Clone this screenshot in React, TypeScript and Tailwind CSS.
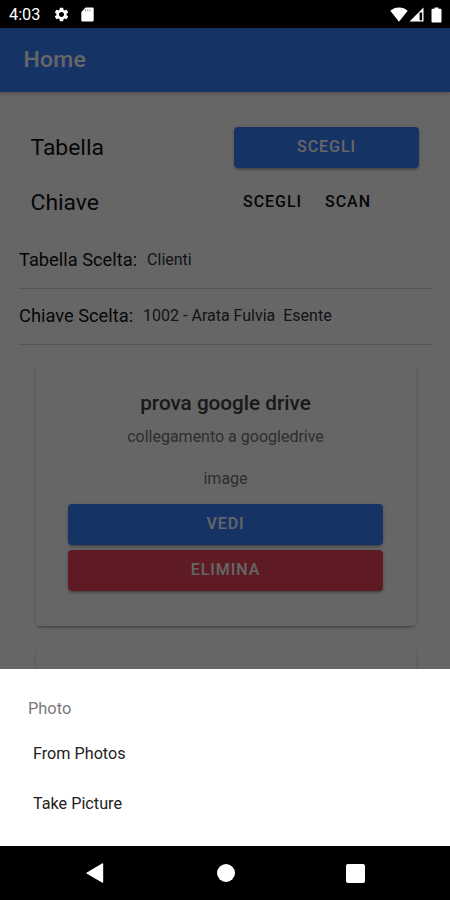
import type { ReactNode } from "react";

const sheetActions = ["From Photos", "Take Picture"];

function StatusBar() {
  return (
    <div className="flex h-7 shrink-0 items-center bg-black pl-[9px] pr-2 pt-px text-white">
      <span className="pt-px text-[16.3px] leading-[20px]">4:03</span>
      <svg className="ml-[13px] h-[17px] w-[17px]" viewBox="0 0 24 24" fill="currentColor">
        <path d="M19.14 12.94c.04-.3.06-.61.06-.94 0-.32-.02-.64-.07-.94l2.03-1.58a.49.49 0 0 0 .12-.61l-1.92-3.32a.488.488 0 0 0-.59-.22l-2.39.96c-.5-.38-1.03-.7-1.62-.94l-.36-2.54a.484.484 0 0 0-.48-.41h-3.84c-.24 0-.43.17-.47.41l-.36 2.54c-.59.24-1.13.57-1.62.94l-2.39-.96c-.22-.08-.47 0-.59.22L2.74 8.87c-.12.21-.08.47.12.61l2.03 1.58c-.05.3-.09.63-.09.94s.02.64.07.94l-2.03 1.58a.49.49 0 0 0-.12.61l1.92 3.32c.12.22.37.29.59.22l2.39-.96c.5.38 1.03.7 1.62.94l.36 2.54c.05.24.24.41.48.41h3.84c.24 0 .44-.17.47-.41l.36-2.54c.59-.24 1.13-.56 1.62-.94l2.39.96c.22.08.47 0 .59-.22l1.92-3.32c.12-.22.07-.47-.12-.61l-2.01-1.58zM12 15.6c-1.98 0-3.6-1.62-3.6-3.6s1.62-3.6 3.6-3.6 3.6 1.62 3.6 3.6-1.62 3.6-3.6 3.6z" />
      </svg>
      <svg className="ml-[11px] h-[15px] w-[13px]" viewBox="0 0 13 15">
        <path d="M4.6.5h6.9A1.2 1.2 0 0 1 12.7 1.7v11.6a1.2 1.2 0 0 1-1.2 1.2h-10A1.2 1.2 0 0 1 .3 13.3V5z" fill="#fff" />
        <path d="M4.500 2.500v1.800M6.800 2.500v1.800M9.100 2.500v1.800" stroke="#888" strokeWidth="0.9" />
      </svg>
      <div className="ml-auto flex items-center">
        <svg className="h-[15px] w-[18px]" viewBox="0 0 18 15" fill="currentColor">
          <path d="M9 14.800.3 3.700C2.600 1.600 5.600.4 9 .4s6.400 1.200 8.700 3.300z" />
        </svg>
        <svg className="ml-px h-[15px] w-[15px]" viewBox="0 0 15 15">
          <path d="M14.500.500v14H.500z" fill="#fff" />
          <path d="M10.600 5.500h2.500v7.800h-2.500z" fill="#000" />
        </svg>
        <svg className="ml-[7px] h-4 w-[11px]" viewBox="0 0 11 16" fill="currentColor">
          <path d="M3.500.5h4v1.300h1.700c.800 0 1.300.500 1.300 1.300v11.400c0 .700-.500 1-1.100 1H1.600c-.600 0-1.100-.300-1.100-1V3.100c0-.800.500-1.300 1.300-1.300h1.700z" />
        </svg>
      </div>
    </div>
  );
}

function Button({ color, children }: { color: "primary" | "danger"; children: ReactNode }) {
  const bg = color === "primary" ? "bg-[#3880ff]" : "bg-[#eb445a]";

  return (
    <button
      className={`${bg} h-[41px] w-full rounded-[4px] pb-[2px] text-[16px] font-medium tracking-[0.96px] text-white shadow-[0_3px_2px_-2px_rgba(0,0,0,0.2),0_2px_3px_rgba(0,0,0,0.14),0_1px_5px_rgba(0,0,0,0.12)]`}
    >
      {children}
    </button>
  );
}

function Item({ label, children }: { label: string; children: ReactNode }) {
  return (
    <div className="ml-[19px] mr-[18px] flex h-14 items-center border-b border-[#d4d4d4] pb-px">
      <span className="text-[18.3px] text-[#111]">{label}</span>
      <span className="ml-2.5 whitespace-pre text-[16px] text-[#333]">{children}</span>
    </div>
  );
}

function NavBar() {
  return (
    <div className="flex h-[54px] shrink-0 items-center bg-black pl-[86px] text-white">
      <svg className="h-5 w-[18px]" viewBox="0 0 18 20" fill="currentColor">
        <path d="M16 .4c.800-.400 1.200 0 1.200.800v17.600c0 .800-.500 1.100-1.200.700L.900 10.800c-.600-.400-.600-1 0-1.400z" />
      </svg>
      <div className="ml-[112.500px] h-[18px] w-[18px] rounded-full bg-white" />
      <div className="ml-[111px] h-[19px] w-[19px] rounded-[2px] bg-white" />
    </div>
  );
}

export default function App() {
  return (
    <div className="flex h-[900px] w-[450px] flex-col overflow-hidden bg-white font-[Roboto,sans-serif] text-black">
      <StatusBar />

      <div className="relative h-[818px] overflow-hidden">
        <header className="relative flex h-16 items-center bg-[#3880ff] pl-[23.500px] pt-px shadow-[0_2px_4px_rgba(0,0,0,0.2)]">
          <h1 className="text-[22.9px] font-medium tracking-[0.28px] text-white">Home</h1>
        </header>

        <main className="pt-7">
          <div className="flex h-[55px] items-center pl-[30.500px] pr-[31px]">
            <span className="w-[203.500px] pt-px text-[22.9px] text-[#111]">Tabella</span>
            <div className="flex-1">
              <Button color="primary">SCEGLI</Button>
            </div>
          </div>
          <div className="flex h-[55px] items-center pl-[30.500px]">
            <span className="w-[212.500px] pt-px text-[22.9px] text-[#111]">Chiave</span>
            <button className="pb-[2px] text-[16px] font-medium tracking-[0.96px] text-[#111]">SCEGLI</button>
            <button className="ml-[23px] pb-[2px] text-[16px] font-medium tracking-[0.96px] text-[#111]">SCAN</button>
          </div>

          <div className="pt-[3px]">
            <Item label="Tabella Scelta:">Clienti</Item>
            <Item label="Chiave Scelta:">{"1002 - Arata Fulvia  Esente"}</Item>
          </div>

          <div className="ml-[36px] mr-[34px] mt-[18px] h-[263px] rounded-[4px] pl-8 pr-[33px] text-center text-[16px] text-[#737373] shadow-[0_3px_2px_-2px_rgba(0,0,0,0.2),0_2px_3px_rgba(0,0,0,0.12),0_1px_4px_rgba(0,0,0,0.1)]">
            <h2 className="pt-[26px] text-[20.7px] font-medium leading-7 text-[#404040]">prova google drive</h2>
            <p className="mt-2 leading-6">collegamento a googledrive</p>
            <p className="mt-[18px] leading-6">image</p>
            <div className="mt-[13px] flex flex-col gap-[5px]">
              <Button color="primary">VEDI</Button>
              <Button color="danger">ELIMINA</Button>
            </div>
          </div>

          <div className="ml-[36px] mr-[34px] mt-6 h-[263px] rounded-[4px] shadow-[0_3px_2px_-2px_rgba(0,0,0,0.2),0_2px_3px_rgba(0,0,0,0.12),0_1px_4px_rgba(0,0,0,0.1)]" />
        </main>

        {/* Backdrop and action sheet */}
        <div className="absolute inset-0 flex flex-col justify-end bg-black/60">
          <div className="h-[177px] bg-white pt-[15px] text-[16.2px]">
            <p className="pl-[28px] text-[16.4px] leading-[50px] text-[#7a7a7a]">Photo</p>
            {sheetActions.map((action) => (
              <button key={action} className="block h-[49.500px] w-full pb-[9px] pl-[33px] text-left text-[#222]">
                {action}
              </button>
            ))}
          </div>
        </div>
      </div>

      <NavBar />
    </div>
  );
}
